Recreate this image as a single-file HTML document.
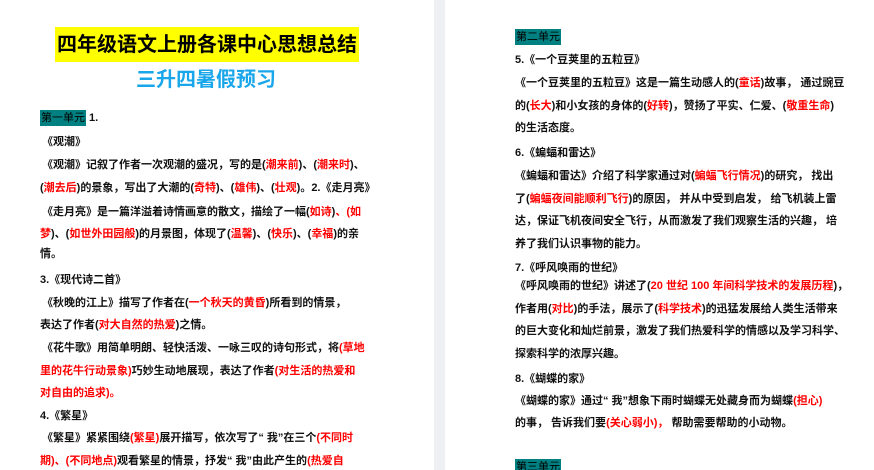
<!DOCTYPE html>
<html><head><meta charset="utf-8"><style>
html,body{margin:0;padding:0;width:874px;height:470px;overflow:hidden;background:#fff;}
body{position:relative;font-family:"Liberation Sans","Noto Sans CJK SC",sans-serif;}
.gap{position:absolute;left:434px;top:0;width:11px;height:470px;background:#eff0f4;}
.l{position:absolute;font-size:11px;line-height:16px;font-weight:bold;color:#111;white-space:nowrap;}
.r{color:#f00;}
.u{background:#008080;font-weight:normal;color:#000;padding:1px 1px;}
</style></head><body>
<div class="gap"></div>
<div style="position:absolute;left:55px;top:27px;width:304px;height:35px;background:#ff0;"></div>
<div class="l" style="left:55px;top:30px;width:304px;text-align:center;font-size:20px;line-height:30px;color:#000;">四年级语文上册各课中心思想总结</div>
<div class="l" style="left:136px;top:66px;font-size:20px;line-height:28px;color:#1aa6ea;">三升四暑假预习</div>

<div class="l" style="left:40px;top:110px;"><span class="u" style="padding:2px 1px;">第一单元</span> 1.</div>
<div class="l" style="left:42px;top:134px;">《观潮》</div>
<div class="l" style="left:42px;top:157px;">《观潮》记叙了作者一次观潮的盛况，写的是(<span class="r">潮来前</span>)、(<span class="r">潮来时</span>)、</div>
<div class="l" style="left:40px;top:180px;">(<span class="r">潮去后</span>)的景象，写出了大潮的(<span class="r">奇特</span>)、(<span class="r">雄伟</span>)、(<span class="r">壮观</span>)。2.《走月亮》</div>
<div class="l" style="left:42px;top:204px;">《走月亮》是一篇洋溢着诗情画意的散文，描绘了一幅(<span class="r">如诗</span>)<span class="r">、(如</span></div>
<div class="l" style="left:40px;top:226px;"><span class="r">梦</span>)、(<span class="r">如世外田园般</span>)的月景图，体现了(<span class="r">温馨</span>)、(<span class="r">快乐</span>)、(<span class="r">幸福</span>)的亲</div>
<div class="l" style="left:40px;top:246px;">情。</div>
<div class="l" style="left:40px;top:272px;">3.《现代诗二首》</div>
<div class="l" style="left:42px;top:295px;">《秋晚的江上》描写了作者在(<span class="r">一个秋天的黄昏</span>)所看到的情景，</div>
<div class="l" style="left:40px;top:317px;">表达了作者(<span class="r">对大自然的热爱</span>)之情。</div>
<div class="l" style="left:42px;top:340px;">《花牛歌》用简单明朗、轻快活泼、一咏三叹的诗句形式，将<span class="r">(草地</span></div>
<div class="l" style="left:40px;top:363px;"><span class="r">里的花牛行动景象)</span>巧妙生动地展现，表达了作者<span class="r">(对生活的热爱和</span></div>
<div class="l" style="left:40px;top:385px;"><span class="r">对自由的追求)。</span></div>
<div class="l" style="left:40px;top:408px;">4.《繁星》</div>
<div class="l" style="left:42px;top:430px;">《繁星》紧紧围绕<span class="r">(繁星)</span>展开描写，依次写了“ 我”在三个<span class="r">(不同时</span></div>
<div class="l" style="left:40px;top:453px;"><span class="r">期)、(不同地点)</span>观看繁星的情景，抒发“ 我”由此产生的<span class="r">(热爱自</span></div>

<div class="l" style="left:515px;top:29px;"><span class="u" style="padding:2px 1px;">第二单元</span></div>
<div class="l" style="left:515px;top:52px;">5.《一个豆荚里的五粒豆》</div>
<div class="l" style="left:515px;top:75px;">《一个豆荚里的五粒豆》这是一篇生动感人的(<span class="r">童话</span>)故事， 通过豌豆</div>
<div class="l" style="left:515px;top:98px;">的(<span class="r">长大</span>)和小女孩的身体的(<span class="r">好转</span>)，赞扬了平实、仁爱、(<span class="r">敬重生命</span>)</div>
<div class="l" style="left:515px;top:120px;">的生活态度。</div>
<div class="l" style="left:515px;top:145px;">6.《蝙蝠和雷达》</div>
<div class="l" style="left:515px;top:168px;">《蝙蝠和雷达》介绍了科学家通过对(<span class="r">蝙蝠飞行情况</span>)的研究， 找出</div>
<div class="l" style="left:515px;top:191px;">了(<span class="r">蝙蝠夜间能顺利飞行</span>)的原因， 并从中受到启发， 给飞机装上雷</div>
<div class="l" style="left:515px;top:213px;">达，保证飞机夜间安全飞行，从而激发了我们观察生活的兴趣， 培</div>
<div class="l" style="left:515px;top:236px;">养了我们认识事物的能力。</div>
<div class="l" style="left:515px;top:260px;">7.《呼风唤雨的世纪》</div>
<div class="l" style="left:515px;top:278px;">《呼风唤雨的世纪》讲述了(<span class="r">20 世纪 100 年间科学技术的发展历程</span>)，</div>
<div class="l" style="left:515px;top:301px;">作者用(<span class="r">对比</span>)的手法，展示了(<span class="r">科学技术</span>)的迅猛发展给人类生活带来</div>
<div class="l" style="left:515px;top:323px;">的巨大变化和灿烂前景，激发了我们热爱科学的情感以及学习科学、</div>
<div class="l" style="left:515px;top:346px;">探索科学的浓厚兴趣。</div>
<div class="l" style="left:515px;top:371px;">8.《蝴蝶的家》</div>
<div class="l" style="left:515px;top:393px;">《蝴蝶的家》通过“ 我”想象下雨时蝴蝶无处藏身而为蝴蝶<span class="r">(担心)</span></div>
<div class="l" style="left:515px;top:415px;">的事， 告诉我们要<span class="r">(关心弱小)，</span> 帮助需要帮助的小动物。</div>
<div class="l" style="left:515px;top:459px;"><span class="u" style="padding:2px 1px;">第三单元</span></div>
</body></html>
